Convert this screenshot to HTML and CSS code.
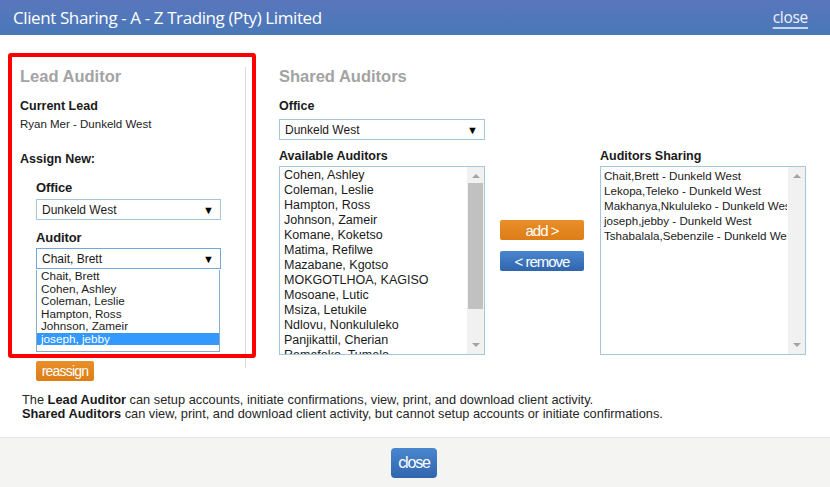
FILE: index.html
```html
<!DOCTYPE html>
<html>
<head>
<meta charset="utf-8">
<link rel="stylesheet" href="styles.css">
</head>
<body>
<div class="dialog">
  <header class="titlebar">
    <span class="title">Client Sharing - A - Z Trading (Pty) Limited</span>
    <a class="title-close">close</a>
  </header>

  <main class="content">
    <section class="lead">
      <div class="lead-inner">
        <h2 class="heading">Lead Auditor</h2>
        <div class="label-bold lbl-current">Current Lead</div>
        <div class="current-name">Ryan Mer - Dunkeld West</div>
        <div class="label-bold lbl-assign">Assign New:</div>
        <div class="assign-group">
          <div class="field-label lbl-office">Office</div>
          <div class="select select-office"><span>Dunkeld West</span><span class="arrow">&#9660;</span></div>
          <div class="field-label lbl-auditor">Auditor</div>
          <div class="select select-focus"><span>Chait, Brett</span><span class="arrow">&#9660;</span></div>
          <ul class="dropdown">
            <li>Chait, Brett</li>
            <li>Cohen, Ashley</li>
            <li>Coleman, Leslie</li>
            <li>Hampton, Ross</li>
            <li>Johnson, Zameir</li>
            <li class="sel">joseph, jebby</li>
          </ul>
        </div>
      </div>
      <button class="btn btn-orange btn-reassign">reassign</button>
    </section>

    <section class="shared">
      <h2 class="heading">Shared Auditors</h2>
      <div class="label-bold lbl-soffice">Office</div>
      <div class="select select-shared"><span>Dunkeld West</span><span class="arrow">&#9660;</span></div>
      <div class="lists">
        <div class="list-col">
          <div class="label-bold">Available Auditors</div>
          <div class="listbox">
            <ul class="items items-avail">
              <li>Cohen, Ashley</li>
              <li>Coleman, Leslie</li>
              <li>Hampton, Ross</li>
              <li>Johnson, Zameir</li>
              <li>Komane, Koketso</li>
              <li>Matima, Refilwe</li>
              <li>Mazabane, Kgotso</li>
              <li>MOKGOTLHOA, KAGISO</li>
              <li>Mosoane, Lutic</li>
              <li>Msiza, Letukile</li>
              <li>Ndlovu, Nonkululeko</li>
              <li>Panjikattil, Cherian</li>
              <li>Ramafoko, Tumelo</li>
            </ul>
            <div class="scrollbar">
              <span class="sb-up"></span>
              <span class="sb-thumb"></span>
              <span class="sb-down"></span>
            </div>
          </div>
        </div>
        <div class="mid-buttons">
          <button class="btn btn-orange btn-move">add &gt;</button>
          <button class="btn btn-blue btn-move">&lt; remove</button>
        </div>
        <div class="list-col">
          <div class="label-bold">Auditors Sharing</div>
          <div class="listbox">
            <ul class="items items-share">
              <li>Chait,Brett - Dunkeld West</li>
              <li>Lekopa,Teleko - Dunkeld West</li>
              <li>Makhanya,Nkululeko - Dunkeld West</li>
              <li>joseph,jebby - Dunkeld West</li>
              <li>Tshabalala,Sebenzile - Dunkeld West</li>
            </ul>
            <div class="scrollbar">
              <span class="sb-up"></span>
              <span class="sb-down"></span>
            </div>
          </div>
        </div>
      </div>
    </section>
  </main>

  <div class="notes">
    <p>The <b>Lead Auditor</b> can setup accounts, initiate confirmations, view, print, and download client activity.</p>
    <p><b>Shared Auditors</b> can view, print, and download client activity, but cannot setup accounts or initiate confirmations.</p>
  </div>

  <footer class="footer">
    <button class="btn btn-blue btn-close">close</button>
  </footer>

  <div class="highlight"></div>
</div>
</body>
</html>
```

FILE: styles.css
```css
* { box-sizing: border-box; }
html, body { margin: 0; padding: 0; }
body {
  width: 830px;
  height: 487px;
  overflow: hidden;
  background: #fff;
  font-family: "Liberation Sans", Arial, sans-serif;
  color: #1a1a1a;
}
.dialog { position: relative; width: 830px; height: 487px; display: flex; flex-direction: column; }

.titlebar {
  height: 35px;
  flex: none;
  background: linear-gradient(#5a76bd, #4878b7);
  display: flex;
  align-items: center;
  justify-content: space-between;
  padding: 0 22px 1px 13px;
  color: #fff;
}
.title {
  font-family: "Open Sans", sans-serif;
  font-size: 17px;
  letter-spacing: -0.4px;
}
.title-close {
  font-family: "Open Sans", sans-serif;
  font-size: 15.5px;
  letter-spacing: -0.3px;
  color: #eef2fa;
  text-decoration: underline;
  text-underline-offset: 4px;
  text-decoration-color: #c8d6ec;
  text-decoration-thickness: 2px;
}

.content {
  display: flex;
  padding: 32px 0 0 20px;
  flex: none;
}

.heading {
  margin: 0;
  font-size: 16.5px;
  line-height: 18px;
  font-weight: bold;
  color: #a3a3a3;
}
.label-bold {
  font-size: 12.5px;
  line-height: 14px;
  font-weight: bold;
  color: #1a1a1a;
}

/* lead column */
.lead { width: 226px; flex: none; }
.lead-inner { border-right: 1px solid #dcdcdc; padding-bottom: 16px; }
.lbl-current { margin-top: 14px; }
.current-name { margin-top: 4px; font-size: 11.5px; line-height: 14px; color: #222; }
.lbl-assign { margin-top: 21px; }
.assign-group { padding-left: 16px; }
.field-label { font-size: 13px; line-height: 15px; color: #1a1a1a; font-weight: 600; letter-spacing: -0.1px; }
.lbl-office { margin-top: 14px; }
.lbl-auditor { margin-top: 10px; }

.select {
  display: flex;
  align-items: center;
  justify-content: space-between;
  height: 21px;
  border: 1px solid #a6c6de;
  background: #fff;
  padding: 0 6px 0 5px;
  font-size: 12px;
  color: #1a1a1a;
}
.select .arrow { font-size: 11px; color: #000; }
.select-office { width: 185px; margin-top: 4px; }
.select-focus { width: 185px; margin-top: 3px; border-color: #74a6d9; }
.select-shared { width: 206px; margin-top: 6px; }

.dropdown {
  list-style: none;
  margin: 0;
  padding: 0 0 6px;
  width: 184px;
  border: 1px solid #8aa8c8;
  border-top: 0;
  font-size: 11.7px;
  line-height: 12.5px;
  color: #1a1a1a;
  margin-top: 1px;
}
.dropdown li { padding-left: 4px; white-space: nowrap; }
.dropdown li.sel { background: #3399ff; color: #fff; }

.btn {
  border: 0;
  color: #fff;
  font-family: "Liberation Sans", Arial, sans-serif;
  cursor: pointer;
  padding: 0;
}
.btn-orange { background: linear-gradient(#e98f2a, #dd7d15); }
.btn-blue { background: linear-gradient(#4a86d0, #2f65ad); }
.btn-reassign {
  display: block;
  margin-top: -7px;
  margin-left: 16px;
  width: 58px;
  height: 20px;
  font-size: 14px;
  letter-spacing: -0.8px;
  border-radius: 2px;
}

/* shared column */
.shared { margin-left: 33px; }
.lbl-soffice { margin-top: 14px; }
.lists { display: flex; margin-top: 9px; }
.list-col { width: 206px; }
.listbox {
  margin-top: 3px;
  position: relative;
  width: 206px;
  height: 189px;
  border: 1px solid #a6c6de;
  overflow: hidden;
}
.items {
  list-style: none;
  margin: 0;
  padding: 1px 0 0 4px;
  width: 186px;
  overflow: hidden;
  line-height: 15px;
  color: #1a1a1a;
}
.items-avail { font-size: 12.5px; }
.items-share { font-size: 11.6px; padding-left: 3px; }
.items li { white-space: nowrap; }
.scrollbar {
  position: absolute;
  right: 0;
  top: 0;
  bottom: 0;
  width: 17px;
  background: #f1f1f1;
  display: flex;
  flex-direction: column;
  align-items: center;
}
.sb-up, .sb-down { width: 0; height: 0; border-left: 4px solid transparent; border-right: 4px solid transparent; flex: none; }
.sb-up { margin-top: 7px; border-bottom: 4px solid #a3a3a3; }
.sb-down { margin-top: auto; margin-bottom: 7px; border-top: 4px solid #a3a3a3; }
.sb-thumb { margin-top: 5px; width: 15px; height: 126px; background: #c1c1c1; flex: none; }

.mid-buttons {
  width: 115px;
  padding: 71px 0 0 15px;
  display: flex;
  flex-direction: column;
  gap: 11px;
}
.btn-move {
  width: 84px;
  height: 20px;
  font-size: 15px;
  letter-spacing: -1px;
  border-radius: 2px;
}

/* notes */
.notes {
  margin-top: 12px;
  padding-left: 22px;
  font-size: 12.8px;
  line-height: 14px;
  color: #262626;
}
.notes p { margin: 0; }
.notes b { color: #1a1a1a; }

.footer {
  margin-top: auto;
  height: 50px;
  background: #f4f4f2;
  border-top: 1px solid #e6e6e4;
  display: flex;
  justify-content: center;
  padding-top: 10px;
}
.btn-close {
  width: 46px;
  height: 30px;
  border-radius: 4px;
  font-size: 16px;
  letter-spacing: -1.2px;
  margin-left: -2px;
}

.highlight {
  position: absolute;
  left: 8px;
  top: 53px;
  width: 248px;
  height: 305px;
  border: 4px solid #ff0000;
  border-radius: 3px;
  pointer-events: none;
}
```
